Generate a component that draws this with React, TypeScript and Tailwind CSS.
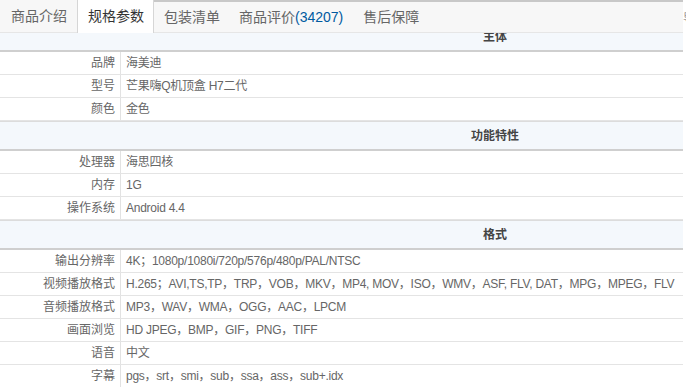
const cjk = { fontFamily: '"Liberation Sans", "Microsoft YaHei", "Noto Sans CJK SC", sans-serif' };

type Row = { label: string; value: string };
type Group = { title: string; rows: Row[] };

const groups: Group[] = [
  {
    title: '主体',
    rows: [
      { label: '品牌', value: '海美迪' },
      { label: '型号', value: '芒果嗨Q机顶盒 H7二代' },
      { label: '颜色', value: '金色' },
    ],
  },
  {
    title: '功能特性',
    rows: [
      { label: '处理器', value: '海思四核' },
      { label: '内存', value: '1G' },
      { label: '操作系统', value: 'Android 4.4' },
    ],
  },
  {
    title: '格式',
    rows: [
      { label: '输出分辨率', value: '4K；1080p/1080i/720p/576p/480p/PAL/NTSC' },
      { label: '视频播放格式', value: 'H.265；AVI,TS,TP，TRP，VOB，MKV，MP4, MOV，ISO，WMV，ASF, FLV, DAT，MPG，MPEG，FLV' },
      { label: '音频播放格式', value: 'MP3，WAV，WMA，OGG，AAC，LPCM' },
      { label: '画面浏览', value: 'HD JPEG，BMP，GIF，PNG，TIFF' },
      { label: '语音', value: '中文' },
      { label: '字幕', value: 'pgs，srt，smi，sub，ssa，ass，sub+.idx' },
    ],
  },
];

function Tabs() {
  return (
    <div className="flex h-[33px] bg-[#f7f7f7] border-b border-[#e6e6e6] text-[14px] text-[#666]">
      <div className="w-[77px] pl-[11px] flex items-center">商品介绍</div>
      <div className="w-[77px] pl-[10px] flex items-center bg-white border-l border-r border-[#d6d6d6] text-[#333] -mb-px">规格参数</div>
      <div className="flex-1 flex border-t-2 border-[#c8c8c8]">
        <div className="pl-[10px] pr-[10px] flex items-center">包装清单</div>
        <div className="pl-[9px] pr-[10px] flex items-center">
          商品评价<span className="text-[#005aa0]">(34207)</span>
        </div>
        <div className="pl-[10px] pr-[10px] flex items-center">售后保障</div>
      </div>
    </div>
  );
}

function Header({ title }: { title: string }) {
  return (
    <div className="h-[30px] border-t border-[#dcdcdc] border-b-2 border-b-[#cfcfcf] bg-[#f4f8fc] flex items-center justify-center text-[12px] font-bold text-[#444]">
      {title}
    </div>
  );
}

function SpecRow({ row }: { row: Row }) {
  return (
    <div className="flex h-[23px] border-b border-[#e4e4e4] text-[12px] text-[#666] bg-white">
      <div className="w-[121px] shrink-0 border-r border-[#e2e2e2] flex items-center justify-end pr-[5px]">{row.label}</div>
      <div className="flex items-center pl-[5px] whitespace-nowrap tracking-[-0.25px]">{row.value}</div>
    </div>
  );
}

export default function App() {
  return (
    <div className="w-[686px] h-[387px] overflow-hidden bg-white flex" style={cjk}>
      <div className="w-[683px] shrink-0 flex flex-col overflow-hidden">
        <Tabs />
        <div className="flex-1 overflow-hidden">
          <div className="w-[990px] -mt-[11px]">
            {groups.map((g) => (
              <div key={g.title}>
                <Header title={g.title} />
                {g.rows.map((r) => (
                  <SpecRow key={r.label} row={r} />
                ))}
              </div>
            ))}
          </div>
        </div>
      </div>
      <div className="flex-1 overflow-hidden">
        <div className="pt-[10px] text-[12px] text-[#999]">导</div>
      </div>
    </div>
  );
}
